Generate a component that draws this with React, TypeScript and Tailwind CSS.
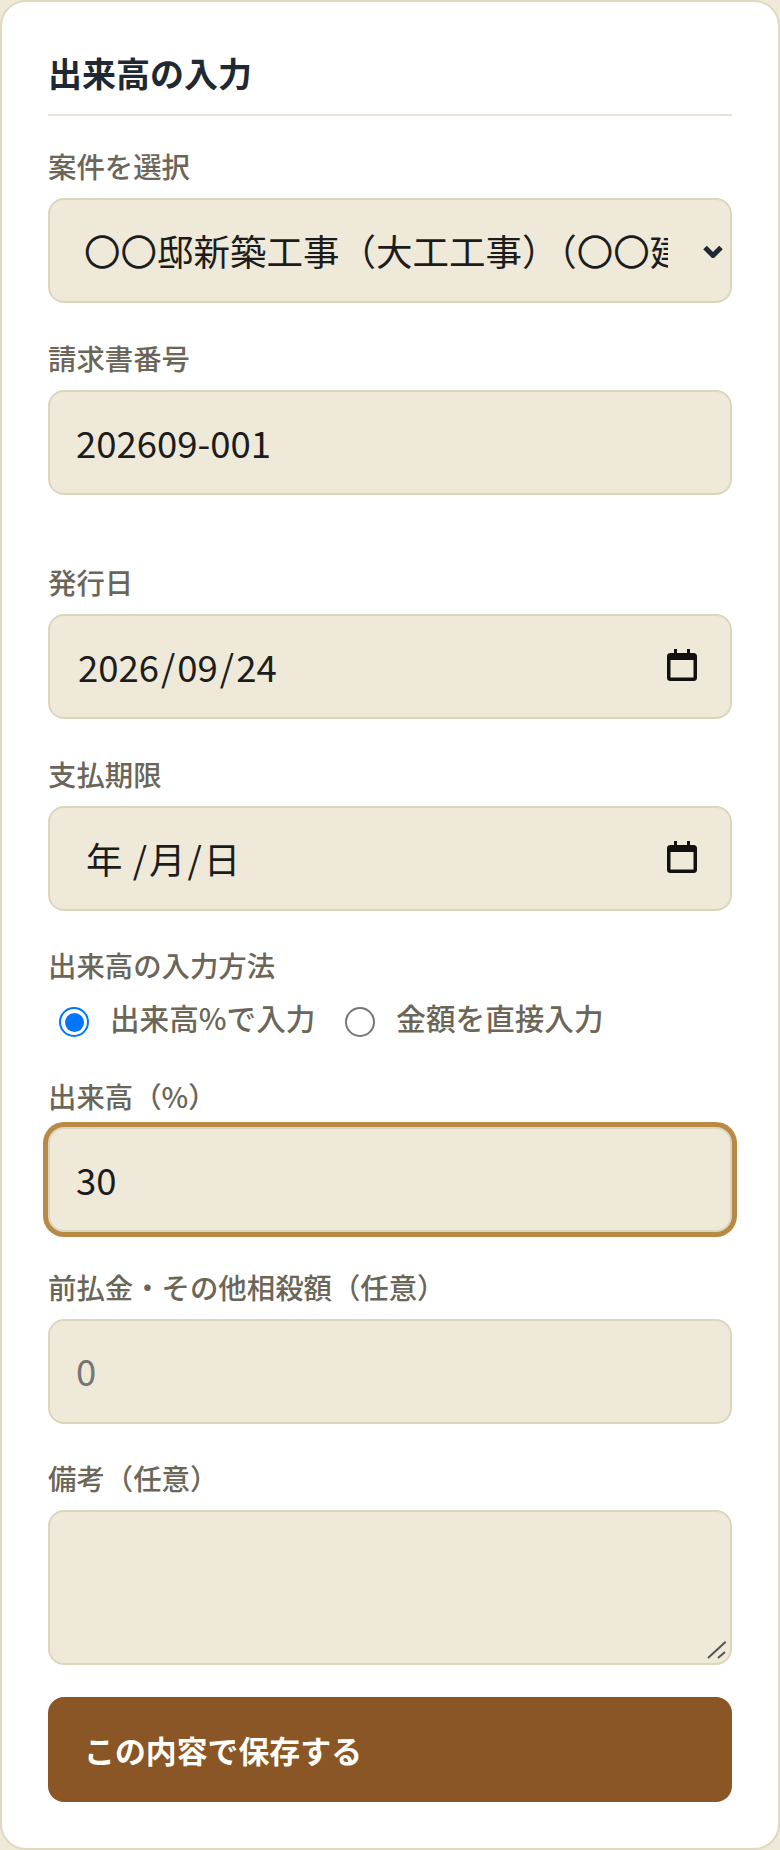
const boxClass =
  "w-full h-[105px] rounded-[16px] border-2 border-[#ddd5bd] bg-[#eee9d8] text-[36.5px] text-[#1c1c1c] outline-none";

function Label({ children }: { children: React.ReactNode }) {
  return (
    <div className="h-[40px] mb-[12px] text-[28.4px] font-medium leading-[40px] text-[#6b6658]">
      {children}
    </div>
  );
}

function CalendarIcon() {
  return (
    <svg width="30" height="32" viewBox="0 0 30 32" className="shrink-0 -mt-[5px]">
      <path
        d="M7 0h3v4h10V0h3v4h3.5A3.5 3.5 0 0 1 30 7.500V28.500A3.500 3.500 0 0 1 26.500 32H3.500A3.500 3.500 0 0 1 0 28.500V7.500A3.500 3.500 0 0 1 3.500 4H7z"
        fill="#111"
      />
      <rect x="3.500" y="11" width="23" height="17.500" fill="#eee9d8" />
    </svg>
  );
}

function DateBox({ parts, left }: { parts: string[]; left: string }) {
  return (
    <div className={`${boxClass} flex items-center justify-between pt-[2px] pr-[33px] ${left}`}>
      <span className="whitespace-pre">
        <span className="px-[2px]">{parts[0]}</span>/<span className="px-[2px]">{parts[1]}</span>/
        <span className="px-[2px]">{parts[2]}</span>
      </span>
      <CalendarIcon />
    </div>
  );
}

function Radio({ checked, label }: { checked?: boolean; label: string }) {
  return (
    <div className="flex items-center">
      {checked ? (
        <div className="w-[30px] h-[30px] rounded-full border-2 border-[#0075ff] flex items-center justify-center">
          <div className="w-[19px] h-[19px] rounded-full bg-[#0075ff]" />
        </div>
      ) : (
        <div className="w-[30px] h-[30px] rounded-full border-2 border-[#767676]" />
      )}
      <span className="ml-[21px] pb-[9px] text-[29.6px] font-medium leading-[40px] text-[#6b6658]">
        {label}
      </span>
    </div>
  );
}

export default function App() {
  return (
    <div
      className="w-[780px] h-[1850px] bg-[#eee9d8] text-[#1c1c1c]"
      style={{ fontFamily: '"Noto Sans CJK JP", "Noto Sans", sans-serif' }}
    >
      <div className="h-full rounded-[26px] border-2 border-[#e0d8c0] bg-white px-[46px] pt-[46px]">
        <h2 className="h-[68px] border-b-2 border-[#e8e2d2] text-[34px] leading-[50px] font-bold text-[#1f2933] mb-[30px]">
          出来高の入力
        </h2>

        <Label>案件を選択</Label>
        <div className={`${boxClass} flex items-center pt-[2px] pl-[34px] mb-[35px] relative`}>
          <span className="w-[584px] overflow-hidden whitespace-nowrap">
            〇〇邸新築工事（大工工事）（〇〇建設）
          </span>
          <svg width="20" height="13" viewBox="0 0 20 13" className="absolute right-[7px] top-[45px]">
            <path d="M2 2.500l8 8 8-8" fill="none" stroke="#1f2933" strokeWidth="5" />
          </svg>
        </div>

        <Label>請求書番号</Label>
        <div className={`${boxClass} flex items-center pt-[2px] pl-[26px] mb-[67px]`}>202609-001</div>

        <Label>発行日</Label>
        <div className="mb-[35px]">
          <DateBox parts={["2026", "09", "24"]} left="pl-[26px]" />
        </div>

        <Label>支払期限</Label>
        <div className="mb-[35px]">
          <DateBox parts={["年 ", "月", "日"]} left="pl-[34px]" />
        </div>

        <div className="h-[40px] mb-[9px] -mt-[1px] text-[28.4px] font-medium leading-[40px] text-[#6b6658]">
          出来高の入力方法
        </div>
        <div className="h-[56px] mb-[26px] flex items-center gap-[30px] pl-[11px]">
          <Radio checked label="出来高%で入力" />
          <Radio label="金額を直接入力" />
        </div>

        <Label>出来高（%）</Label>
        <div
          className={`${boxClass} -mt-[1px] flex items-center pt-[2px] pl-[26px] mb-[35px] border-[#b98a45] ring-[5px] ring-[#b98a45]`}
        >
          30
        </div>

        <Label>前払金・その他相殺額（任意）</Label>
        <div className={`${boxClass} flex items-center pl-[26px] mb-[34px] text-[#757575]`}>0</div>

        <Label>備考（任意）</Label>
        <div className={`${boxClass} h-[155px] mb-[32px] relative`}>
          <svg width="20" height="20" viewBox="0 0 20 20" className="absolute right-[3px] bottom-[3px]">
            <path d="M1 18L18.700 1.700M11 18l7-6" stroke="#555" strokeWidth="2" fill="none" />
          </svg>
        </div>

        <div className="h-[105px] rounded-[16px] bg-[#8a5626] flex items-center pt-[2px] pl-[36px] text-[30.900px] font-bold text-[#fffdf8]">
          この内容で保存する
        </div>
      </div>
    </div>
  );
}
